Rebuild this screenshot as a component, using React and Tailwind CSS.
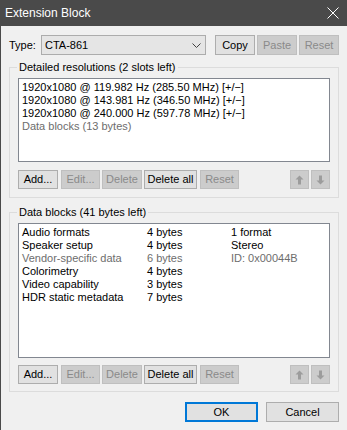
import React from "react";

const Btn = ({ children, w, disabled, h = "h-[19px]" }) => (
  <div
    className={`${w} ${h} shrink-0 flex items-center justify-center border text-[11px] leading-none ${
      disabled
        ? "bg-[#cccccc] border-[#bfbfbf] text-[#8a8a8a]"
        : "bg-[#e1e1e1] border-[#adadad] text-black"
    }`}
  >
    {children}
  </div>
);

const Arrow = ({ down }) => (
  <svg width="9" height="10" viewBox="0 0 9 10" className={down ? "rotate-180" : ""}>
    <polygon points="4.5,0.5 8.5,4.5 6,4.5 6,9.5 3,9.5 3,4.5 0.5,4.5" fill="#9c9c9c" />
  </svg>
);

const ButtonRow = ({ mt }) => (
  <div className={`${mt} flex items-center h-[19px]`}>
    <Btn w="w-[40px]">Add...</Btn>
    <div className="ml-[3px]">
      <Btn w="w-[39px]" disabled>Edit...</Btn>
    </div>
    <div className="ml-[2px]">
      <Btn w="w-[40px]" disabled>Delete</Btn>
    </div>
    <div className="ml-[2px]">
      <Btn w="w-[53px]">Delete all</Btn>
    </div>
    <div className="ml-[3px]">
      <Btn w="w-[39px]" disabled>Reset</Btn>
    </div>
    <div className="ml-auto flex gap-[2px]">
      <Btn w="w-[19px]" disabled><Arrow /></Btn>
      <Btn w="w-[19px]" disabled><Arrow down /></Btn>
    </div>
  </div>
);

const blocks = [
  ["Audio formats", "4 bytes", "1 format", false],
  ["Speaker setup", "4 bytes", "Stereo", false],
  ["Vendor-specific data", "6 bytes", "ID: 0x00044B", true],
  ["Colorimetry", "4 bytes", "", false],
  ["Video capability", "3 bytes", "", false],
  ["HDR static metadata", "7 bytes", "", false],
];

export default function App() {
  return (
    <div className="w-[347px] h-[430px] bg-[#f0f0f0] border-l border-[#4a4a4a] flex flex-col overflow-hidden [font-family:'Liberation_Sans',Arial,sans-serif] text-black">
      <div className="h-[26px] shrink-0 bg-[#4a4a4a] flex items-center justify-between pl-[4px] pr-[8px]">
        <span className="text-white text-[12px] leading-none">Extension Block</span>
        <svg width="12" height="12" viewBox="0 0 12 12">
          <path d="M0.5 0.5 L11.5 11.5 M11.5 0.5 L0.5 11.5" stroke="#ffffff" strokeWidth="1" />
        </svg>
      </div>

      <div className="flex flex-col px-[8px]">
        <div className="mt-[9px] h-[20px] flex items-center">
          <span className="w-[32px] text-[11px] leading-none">Type:</span>
          <div className="w-[165px] h-[20px] border border-[#acacac] bg-[#e5e5e5] flex items-center justify-between pl-[3px] pr-[4px]">
            <span className="text-[11px] leading-none">CTA-861</span>
            <svg width="9" height="5" viewBox="0 0 9 5">
              <path d="M0.5 0.5 L4.5 4.5 L8.5 0.5" stroke="#404040" strokeWidth="1" fill="none" />
            </svg>
          </div>
          <div className="ml-[9px] flex gap-[2px]">
            <Btn w="w-[40px]" h="h-[20px]">Copy</Btn>
            <Btn w="w-[40px]" h="h-[20px]" disabled>Paste</Btn>
            <Btn w="w-[40px]" h="h-[20px]" disabled>Reset</Btn>
          </div>
        </div>

        <fieldset className="mt-[5px] border border-[#dcdcdc] px-[8px] pt-[4px] pb-[8px] min-w-0">
          <legend className="-ml-[1px] px-[2px] text-[11px] leading-[14px]">Detailed resolutions (2 slots left)</legend>
          <div className="h-[84px] border border-[#828790] bg-white px-[3px] pt-[2px] text-[11px] leading-[13px]">
            <div>1920x1080 @ 119.982 Hz (285.50 MHz) [+/−]</div>
            <div>1920x1080 @ 143.981 Hz (346.50 MHz) [+/−]</div>
            <div>1920x1080 @ 240.000 Hz (597.78 MHz) [+/−]</div>
            <div className="text-[#6d6d6d]">Data blocks (13 bytes)</div>
          </div>
          <ButtonRow mt="mt-[8px]" />
        </fieldset>

        <fieldset className="mt-[7px] border border-[#dcdcdc] px-[8px] pt-[4px] pb-[7px] min-w-0">
          <legend className="-ml-[1px] px-[2px] text-[11px] leading-[14px]">Data blocks (41 bytes left)</legend>
          <div className="h-[135px] border border-[#828790] bg-white px-[3px] pt-[2px] text-[11px] leading-[13px]">
            {blocks.map(([a, b, c, g]) => (
              <div key={a} className={`flex ${g ? "text-[#6d6d6d]" : ""}`}>
                <span className="w-[125px] shrink-0">{a}</span>
                <span className="w-[84px] shrink-0">{b}</span>
                <span>{c}</span>
              </div>
            ))}
          </div>
          <ButtonRow mt="mt-[7px]" />
        </fieldset>

        <div className="mt-[10px] flex justify-end gap-[8px]">
          <div className="w-[73px] h-[20px] border-2 border-[#0078d7] bg-[#e1e1e1] flex items-center justify-center text-[11px] leading-none">OK</div>
          <div className="w-[73px] h-[20px] border border-[#adadad] bg-[#e1e1e1] flex items-center justify-center text-[11px] leading-none">Cancel</div>
        </div>
      </div>
    </div>
  );
}
